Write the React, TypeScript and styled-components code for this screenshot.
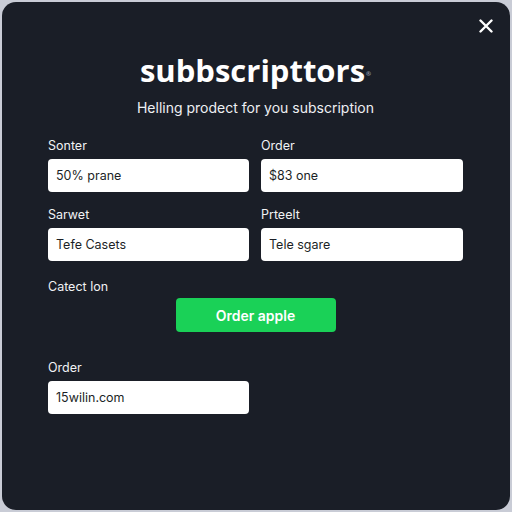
import React from "react";
import styled, { createGlobalStyle } from "styled-components";

const GlobalStyle = createGlobalStyle`
  html, body {
    margin: 0;
    padding: 0;
    background: #c9ccd6;
  }
  body {
    font-family: "Inter", "Noto Sans", sans-serif;
  }
`;

const Modal = styled.div`
  position: relative;
  box-sizing: border-box;
  margin: 2px;
  width: 508px;
  height: 508px;
  border-radius: 14px;
  background: #1a1e27;
  padding: 49px 47px 0 46px;
  color: #ffffff;
  display: flex;
  flex-direction: column;
`;

const Close = styled.button`
  position: absolute;
  top: 14px;
  right: 14px;
  width: 20px;
  height: 20px;
  padding: 0;
  border: none;
  background: transparent;
  display: flex;
  align-items: center;
  justify-content: center;
  cursor: pointer;
`;

const Title = styled.h1`
  margin: 0;
  text-align: center;
  font-family: "Open Sans", "Noto Sans", sans-serif;
  font-size: 31px;
  font-weight: 700;
  letter-spacing: 0;
  line-height: 38px;
  sup {
    font-size: 6px;
    vertical-align: top;
    position: relative;
    top: 4px;
    margin-left: 1px;
    color: #9aa0ab;
  }
`;

const Subtitle = styled.p`
  margin: 9px 0 0;
  text-align: center;
  font-size: 14px;
  line-height: 20px;
  color: #eef0f3;
`;

const Grid = styled.div`
  margin-top: 20px;
  display: grid;
  grid-template-columns: 201px 202px;
  column-gap: 12px;
  row-gap: 15px;
`;

const Field = styled.div`
  display: flex;
  flex-direction: column;
`;

const Label = styled.label<{ $gap?: number }>`
  font-size: 12.5px;
  line-height: 16px;
  color: #f1f2f4;
  margin-bottom: ${({ $gap }) => ($gap ?? 5)}px;
`;

const Input = styled.div`
  box-sizing: border-box;
  height: 33px;
  border-radius: 4px;
  background: #ffffff;
  color: #1c1f26;
  font-size: 12.5px;
  padding: 0 0 0 8px;
  display: flex;
  align-items: center;
`;

const Section = styled.div`
  margin-top: 18px;
  display: flex;
  flex-direction: column;
`;

const Button = styled.button`
  align-self: center;
  margin: 0;
  width: 160px;
  height: 34px;
  border: none;
  border-radius: 4px;
  background: #1ad157;
  color: #ffffff;
  font-family: "Inter", "Noto Sans", sans-serif;
  font-size: 14px;
  font-weight: 600;
  cursor: pointer;
`;

const Bottom = styled.div`
  margin-top: 28px;
  width: 201px;
`;

const fields = [
  { label: "Sonter", value: "50% prane" },
  { label: "Order", value: "$83 one" },
  { label: "Sarwet", value: "Tefe Casets" },
  { label: "Prteelt", value: "Tele sgare" },
];

export default function App() {
  return (
    <>
      <GlobalStyle />
      <Modal>
        <Close aria-label="Close">
          <svg width="14" height="14" viewBox="0 0 14 14">
            <path d="M1.5 1.5 L12.5 12.5 M12.5 1.5 L1.5 12.5" stroke="#ffffff" strokeWidth="2.4" strokeLinecap="round" />
          </svg>
        </Close>
        <Title>
          subbscripttors<sup>®</sup>
        </Title>
        <Subtitle>Helling prodect for you subscription</Subtitle>
        <Grid>
          {fields.map((f) => (
            <Field key={f.label}>
              <Label>{f.label}</Label>
              <Input>{f.value}</Input>
            </Field>
          ))}
        </Grid>
        <Section>
          <Label $gap={3}>Catect lon</Label>
          <Button>Order apple</Button>
        </Section>
        <Bottom>
          <Field>
            <Label>Order</Label>
            <Input>15wilin.com</Input>
          </Field>
        </Bottom>
      </Modal>
    </>
  );
}
